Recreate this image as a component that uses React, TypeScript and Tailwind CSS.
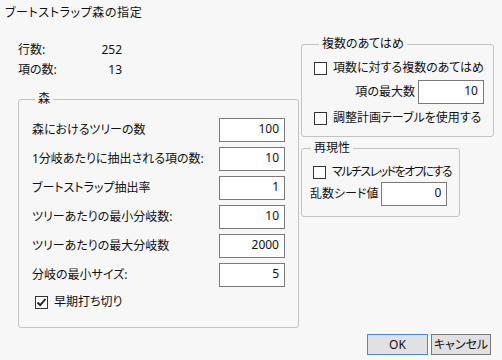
import React from 'react';

const font = "[font-family:'Noto_Sans','Noto_Sans_CJK_JP',sans-serif] [font-feature-settings:'palt']";

const Field = ({ value }: { value: string }) => (
  <div className="w-[66px] h-[24px] shrink-0 border border-[#7a7a7a] bg-white text-right pr-[5px] pt-[2px] leading-[16px]">
    {value}
  </div>
);

const Check = ({ label, checked = false, tight = false }: { label: string; checked?: boolean; tight?: boolean }) => (
  <div className="flex items-center h-[16px] gap-[6px] whitespace-nowrap">
    <div className="w-[13px] h-[13px] shrink-0 border border-[#333333] bg-white flex items-center justify-center">
      {checked && (
        <svg width="11" height="11" viewBox="0 0 11 11">
          <path d="M1.5 5.5 L4.2 8.2 L9.5 2" fill="none" stroke="#1a1a1a" strokeWidth="1.8" />
        </svg>
      )}
    </div>
    <span className={tight ? 'leading-[16px] tracking-[-1.5px]' : 'leading-[16px]'}>{label}</span>
  </div>
);

const forestRows = [
  { label: '森におけるツリーの数', value: '100' },
  { label: '1分岐あたりに抽出される項の数:', value: '10' },
  { label: 'ブートストラップ抽出率', value: '1' },
  { label: 'ツリーあたりの最小分岐数:', value: '10' },
  { label: 'ツリーあたりの最大分岐数', value: '2000' },
  { label: '分岐の最小サイズ:', value: '5' },
];

export default function App() {
  return (
    <div className={`w-[502px] h-[360px] bg-[#f7f7f7] text-[12px] text-[#111111] flex flex-col ${font}`}>
      <div className="pl-[5px] pt-[5px] h-[21px] leading-[16px] tracking-[0.6px]">ブートストラップ森の指定</div>

      <div className="flex items-start pl-[18px]">
        {/* left column */}
        <div className="w-[281px] pt-[19px]">
          <div className="grid grid-cols-[70px_34px] leading-[20px]">
            <span>行数:</span>
            <span className="text-right">252</span>
            <span>項の数:</span>
            <span className="text-right">13</span>
          </div>

          <fieldset className="mt-[11px] border border-[#c3c3c3] rounded-[3px] px-[13px] pt-[11px] pb-[17px]">
            <legend className="ml-[3px] px-[3px] leading-[16px]">森</legend>
            <div className="flex flex-col gap-[5px]">
              {forestRows.map((r) => (
                <div key={r.label} className="flex items-center justify-between h-[24px]">
                  <span className="leading-[16px] whitespace-nowrap">{r.label}</span>
                  <Field value={r.value} />
                </div>
              ))}
            </div>
            <div className="mt-[7px] ml-[3px]">
              <Check label="早期打ち切り" checked />
            </div>
          </fieldset>
        </div>

        {/* right column */}
        <div className="ml-[2px] w-[191px] pt-[15px]">
          <fieldset className="border border-[#c3c3c3] rounded-[3px] pl-[12px] pr-[9px] pt-[8px] pb-[10px]">
            <legend className="ml-[5px] px-[3px] leading-[16px]">複数のあてはめ</legend>
            <Check label="項数に対する複数のあてはめ" />
            <div className="mt-[4px] flex items-center justify-end gap-[3px] h-[24px]">
              <span className="leading-[16px] whitespace-nowrap">項の最大数</span>
              <Field value="10" />
            </div>
            <div className="mt-[6px]">
              <Check label="調整計画テーブルを使用する" />
            </div>
          </fieldset>

          <fieldset className="mt-[3px] w-[158px] border border-[#c3c3c3] rounded-[3px] px-[8px] pt-[8px] pb-[10px]">
            <legend className="ml-[1px] px-[3px] leading-[16px]">再現性</legend>
            <div className="ml-[3px]">
              <Check label="マルチスレッドをオフにする" tight />
            </div>
            <div className="mt-[2px] flex items-center gap-[3px] h-[24px]">
              <span className="leading-[16px] whitespace-nowrap">乱数シード値</span>
              <Field value="0" />
            </div>
          </fieldset>
        </div>
      </div>

      <div className="mt-[6px] flex justify-end gap-[3px] pr-[11px]">
        <button className="w-[61px] h-[21px] border border-[#3a8ee6] bg-[#e1e1e1] leading-[18px]">OK</button>
        <button className="w-[60px] h-[21px] border border-[#7a7a7a] bg-[#e1e1e1] leading-[18px] whitespace-nowrap">キャンセル</button>
      </div>
    </div>
  );
}
